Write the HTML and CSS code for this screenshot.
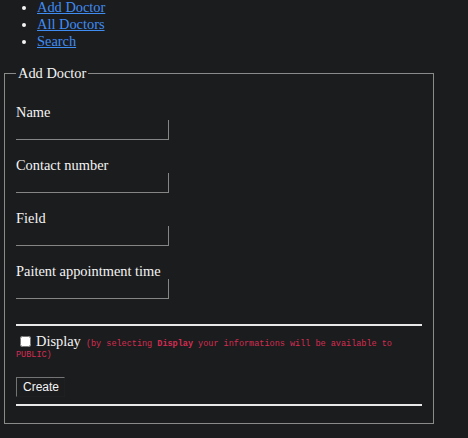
FILE: index.html
```html
<!DOCTYPE html>
<html>
<head>
<meta charset="utf-8">
<link rel="stylesheet" href="styles.css">
</head>
<body>
<ul class="nav">
  <li><a href="#">Add Doctor</a></li>
  <li><a href="#">All Doctors</a></li>
  <li><a href="#">Search</a></li>
</ul>
<fieldset class="box">
  <legend class="box-title">Add Doctor</legend>
  <div class="field">
    <label class="field-label">Name</label>
    <input class="field-input" type="text">
  </div>
  <div class="field">
    <label class="field-label">Contact number</label>
    <input class="field-input" type="text">
  </div>
  <div class="field">
    <label class="field-label">Field</label>
    <input class="field-input" type="text">
  </div>
  <div class="field field-last">
    <label class="field-label">Paitent appointment time</label>
    <input class="field-input" type="text">
  </div>
  <hr class="rule rule-top">
  <div class="display-row"><input class="check" type="checkbox"><span class="display-label">Display</span><span class="note"> (by selecting <b>Display</b> your informations will be available to PUBLIC)</span></div>
  <button class="create" type="button">Create</button>
  <hr class="rule rule-bottom">
</fieldset>
</body>
</html>
```
FILE: styles.css
```css
html, body {
  background: #1b1c1e;
}
body {
  margin: 0;
  color: #f4f4f4;
  font-family: "Liberation Serif", "Times New Roman", serif;
  font-size: 14.4px;
}
.nav {
  margin: -1px 0 15px;
  padding-left: 37px;
  line-height: 17px;
}
.nav a {
  color: #3f8cf2;
  text-decoration: underline;
}
.box {
  box-sizing: border-box;
  width: 430px;
  margin: 0 0 0 4px;
  padding: 22px 11px 17px;
  border: 1px solid #8a8a8a;
  display: flex;
  flex-direction: column;
  align-items: flex-start;
}
.box-title {
  padding: 0 2px;
  line-height: 17px;
  font-size: 14.4px;
}
.field {
  display: flex;
  flex-direction: column;
  align-items: flex-start;
  margin-bottom: 17px;
}
.field-last {
  margin-bottom: 0;
}
.field-label {
  line-height: 16px;
}
.field-input {
  box-sizing: border-box;
  width: 153px;
  height: 20px;
  margin: 0;
  padding: 0 2px;
  background: transparent;
  border: none;
  border-right: 1px solid #858585;
  border-bottom: 1px solid #858585;
  outline: none;
  color: #fff;
}
.rule {
  align-self: stretch;
  height: 2px;
  margin: 0;
  border: none;
  background: #e9e9e9;
}
.rule-top {
  margin-top: 25px;
}
.display-row {
  margin-top: 7px;
  font-family: "Liberation Mono", "Courier New", monospace;
  font-size: 8.5px;
  line-height: 11px;
  color: #d62c52;
}
.check {
  width: 11px;
  height: 11px;
  margin: 0 5px 0 4px;
  vertical-align: -1px;
}
.display-label {
  font-family: "Liberation Serif", "Times New Roman", serif;
  font-size: 14.4px;
  line-height: 16px;
  color: #f4f4f4;
}
.note b {
  font-weight: bold;
}
.create {
  box-sizing: border-box;
  margin-top: 16px;
  width: 49px;
  height: 20px;
  padding: 0 6px;
  text-align: left;
  font-family: "Liberation Sans", Arial, sans-serif;
  font-size: 12px;
  color: #f4f4f4;
  background: #1b1c1e;
  border: 1px solid;
  border-color: #747474 #1e1f21 #1e1f21 #747474;
}
.rule-bottom {
  margin-top: 7px;
}
```
